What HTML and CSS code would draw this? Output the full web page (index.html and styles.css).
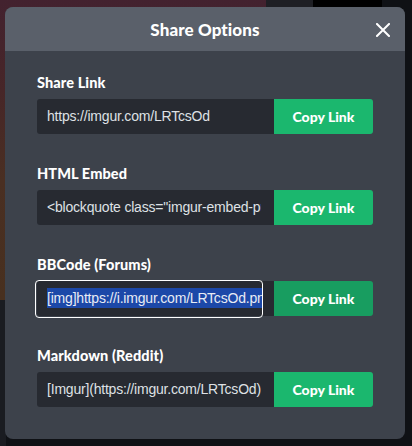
FILE: index.html
```html
<!DOCTYPE html>
<html>
<head>
<meta charset="utf-8">
<link rel="stylesheet" href="styles.css">
</head>
<body>
<div class="modal">
  <div class="modal-header">
    <h1 class="title">Share Options</h1>
    <button class="close" aria-label="Close">
      <svg width="14" height="14" viewBox="0 0 14 14"><path d="M1 1L13 13M13 1L1 13" stroke="#fff" stroke-width="2" stroke-linecap="square"/></svg>
    </button>
  </div>
  <div class="modal-body">
    <div class="section">
      <div class="label">Share Link</div>
      <div class="row">
        <div class="field"><div class="input">https://imgur.com/LRTcsOd</div></div>
        <button class="copy">Copy Link</button>
      </div>
    </div>
    <div class="section">
      <div class="label">HTML Embed</div>
      <div class="row">
        <div class="field"><div class="input">&lt;blockquote class="imgur-embed-pub" lang="en" data-id="LRTcsOd"&gt;</div></div>
        <button class="copy">Copy Link</button>
      </div>
    </div>
    <div class="section">
      <div class="label">BBCode (Forums)</div>
      <div class="row">
        <div class="field"><div class="input focused"><span class="sel">[img]https://i.imgur.com/LRTcsOd.png[/img]</span></div></div>
        <button class="copy active">Copy Link</button>
      </div>
    </div>
    <div class="section">
      <div class="label">Markdown (Reddit)</div>
      <div class="row">
        <div class="field"><div class="input">[Imgur](https://imgur.com/LRTcsOd)</div></div>
        <button class="copy">Copy Link</button>
      </div>
    </div>
  </div>
</div>
</body>
</html>
```
FILE: styles.css
```css
html, body {
  margin: 0;
  padding: 0;
}
body {
  width: 412px;
  height: 446px;
  overflow: hidden;
  font-family: Lato, "Open Sans", sans-serif;
  background-color: #0f1115;
  background-image:
    linear-gradient(#000, #000),
    linear-gradient(#1e1f24, #1e1f24),
    linear-gradient(180deg, #43222f 0%, #472628 30%, #4a2f22 60%, #48301f 100%),
    linear-gradient(#1a1c21, #1a1c21);
  background-size: 69px 8px, 47px 8px, 266px 300px, 6px 146px;
  background-position: 313px 0, 266px 0, 0 0, 0 300px;
  background-repeat: no-repeat;
  padding-top: 7px;
  padding-left: 5px;
  box-sizing: border-box;
}
.modal {
  width: 400px;
  height: 432px;
  border-radius: 8px;
  overflow: hidden;
  background: #3d424b;
  display: flex;
  flex-direction: column;
}
.modal-header {
  height: 44px;
  flex: none;
  background: #5a606a;
  display: flex;
  align-items: center;
  justify-content: center;
  position: relative;
}
.title {
  margin: 0;
  font-size: 17px;
  font-weight: 900;
  color: #fff;
  letter-spacing: 0.1px;
}
.close {
  position: absolute;
  right: 14px;
  top: 15px;
  width: 16px;
  height: 16px;
  padding: 0;
  border: 0;
  background: none;
  display: flex;
  align-items: center;
  justify-content: center;
}
.modal-body {
  padding: 22px 32px 32px;
  display: flex;
  flex-direction: column;
  gap: 30px;
}
.label {
  height: 20px;
  line-height: 20px;
  font-size: 14.5px;
  font-weight: 900;
  color: #fff;
  margin-bottom: 6px;
  letter-spacing: 0.1px;
}
.row {
  display: flex;
  height: 35px;
}
.field {
  width: 237px;
  flex: none;
  background: #272a31;
  border-radius: 3px 0 0 3px;
  display: flex;
  align-items: center;
}
.input {
  width: 224px;
  height: 35px;
  box-sizing: border-box;
  padding-left: 10px;
  line-height: 35px;
  font-family: "Liberation Sans", Arial, sans-serif;
  font-size: 14px;
  letter-spacing: -0.2px;
  color: #dfe1e5;
  white-space: nowrap;
  overflow: hidden;
  text-overflow: clip;
  border-radius: 4px;
}
.input.focused {
  height: 38px;
  line-height: 34px;
  margin-left: -2px;
  padding-left: 11px;
  width: 228px;
  border: 1.5px solid #fff;
}
.sel {
  background: #1c48a8;
  color: #e8ecf5;
  padding: 2px 0;
}
.copy {
  width: 99px;
  flex: none;
  border: 0;
  border-radius: 0 3px 3px 0;
  background: #1bb76e;
  color: #fff;
  font-family: Lato, "Open Sans", sans-serif;
  font-weight: 900;
  font-size: 14px;
  padding: 0;
}
.copy.active {
  background: #189d60;
}
```
